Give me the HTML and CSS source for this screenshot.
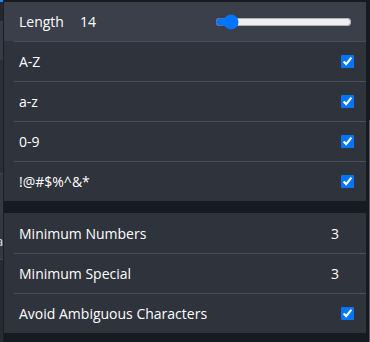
FILE: index.html
```html
<!DOCTYPE html>
<html>
  <head>
    <link rel="stylesheet" href="styles.css">
  </head>
  <body>
    <!-- bits of the page under the popup -->
    <div class="behind-left">
      <div class="b-top"></div>
      <div class="b-dark"></div>
      <div class="b-light" style="height:39px"></div>
      <div class="b-mid" style="height:113px"></div>
      <div class="b-item"><span>a</span></div>
      <div class="b-base"></div>
    </div>

    <div class="panel">
      <div class="group">
        <div class="head">
          <span class="label">Length</span>
          <span class="len">14</span>
          <input class="slider" type="range" min="6" max="125" value="14">
        </div>
        <div class="row"><span>A-Z</span><input type="checkbox" checked></div>
        <div class="row"><span>a-z</span><input type="checkbox" checked></div>
        <div class="row"><span>0-9</span><input type="checkbox" checked></div>
        <div class="row"><span>!@#$%^&amp;*</span><input type="checkbox" checked></div>
      </div>

      <div class="group">
        <div class="row first"><span>Minimum Numbers</span><span class="num">3</span></div>
        <div class="row"><span>Minimum Special</span><span class="num">3</span></div>
        <div class="row"><span>Avoid Ambiguous Characters</span><input type="checkbox" checked></div>
      </div>
    </div>

    <div class="behind-right"><div class="bar"></div></div>
  </body>
</html>
```

FILE: styles.css
```css
html, body {
  margin: 0;
  height: 100%;
}
body {
  display: flex;
  background-color: #161a21;
  font-family: "Open Sans", "Noto Sans", sans-serif;
  font-size: 14px;
  color: #fff;
  overflow: hidden;
}

/* page behind */
.behind-left {
  width: 3px;
  border-right: 1px solid #1b1e25;
  display: flex;
  flex-direction: column;
  overflow: hidden;
}
.b-top {
  height: 2px;
  background-color: #1a8cff;
}
.b-dark {
  height: 19px;
  background-color: #22262e;
}
.b-light {
  background-color: #363b45;
}
.b-mid {
  background-color: #2b2f37;
  border-bottom: 1px solid #41454e;
}
.b-item {
  height: 86px;
  box-sizing: border-box;
  padding-top: 57px;
  background-color: #333842;
  border-bottom: 1px solid #41454e;
  font-size: 13px;
  line-height: 20px;
  color: #dfe6f0;
}
.b-item span {
  margin-left: -4px;
}
.b-base {
  flex: 1;
  background-color: #262a31;
}
.behind-right {
  width: 4px;
  display: flex;
  flex-direction: column;
  align-items: flex-end;
}
.bar {
  width: 1px;
  margin-top: 120px;
  flex: 1;
  background-color: #565c67;
}

/* popup */
.panel {
  flex: 1;
  padding-top: 2px;
}
.group {
  background-color: #2f333c;
  margin-bottom: 12px;
}
.head {
  display: flex;
  align-items: center;
  height: 39px;
  padding: 0 14px 0 15px;
  background-color: #3a3f4a;
}
.label {
  width: 61px;
}
.len {
  flex: 1;
}
.slider {
  width: 137px;
  margin: 0;
}
.row {
  display: flex;
  align-items: center;
  justify-content: space-between;
  height: 39px;
  margin-left: 10px;
  padding: 0 12px 0 5px;
  border-top: 1px solid #4a4e58;
}
.row.first {
  height: 40px;
  border-top: none;
}
.row input[type=checkbox] {
  width: 13px;
  height: 13px;
  margin: 0;
}
.num {
  margin-right: 15px;
}
```
